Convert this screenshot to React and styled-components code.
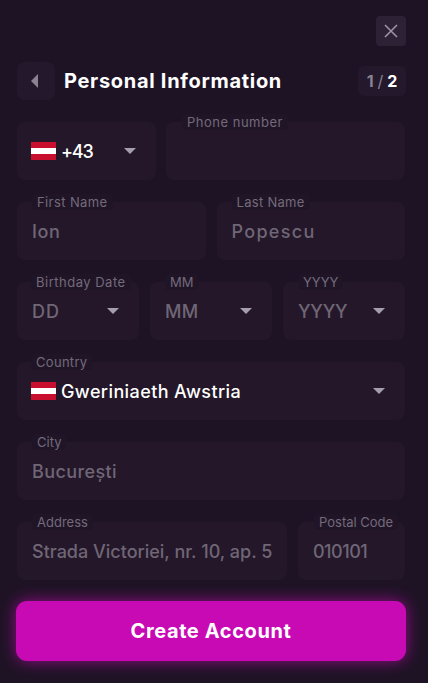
import React from "react";
import styled, { createGlobalStyle } from "styled-components";

const GlobalStyle = createGlobalStyle`
  html, body {
    margin: 0;
    padding: 0;
    height: 100%;
    background: #1e1325;
    font-family: "Inter", "Noto Sans", sans-serif;
  }
  * { box-sizing: border-box; }
`;

const Caret = () => (
  <CaretIcon viewBox="0 0 12 6"><path d="M0 0h12L6 6z" fill="currentColor" /></CaretIcon>
);

const Flag = () => (
  <FlagBox><span /><span /><span /></FlagBox>
);

function Field({ label, labelLeft, labelTrack, value, track, filled, flag, caret }) {
  return (
    <FieldBox>
      {label && <FieldLabel $left={labelLeft} $track={labelTrack}>{label}</FieldLabel>}
      {flag && <Flag />}
      {value && <FieldValue $filled={filled} $track={track}>{value}</FieldValue>}
      {caret && <Caret />}
    </FieldBox>
  );
}

export default function App() {
  return (
    <Screen>
      <GlobalStyle />
      <TopBar>
        <CloseButton>
          <svg width="14" height="14" viewBox="0 0 14 14">
            <path d="M1 1l12 12M13 1L1 13" stroke="currentColor" strokeWidth="1.6" fill="none" />
          </svg>
        </CloseButton>
      </TopBar>
      <Header>
        <BackButton>
          <svg width="7" height="14" viewBox="0 0 7 14"><path d="M7 0v14L0 7z" fill="currentColor" /></svg>
        </BackButton>
        <Title>Personal Information</Title>
        <Steps><span>1</span><i>/</i><b>2</b></Steps>
      </Header>
      <Form>
        <Row $cols="139px 1fr" $gap={10}>
          <Field value="+43" track={-1.2} filled flag caret />
          <Field label="Phone number" labelLeft={21} labelTrack={0.5} />
        </Row>
        <Row $cols="1fr 1fr">
          <Field label="First Name" labelLeft={20} labelTrack={0.4} value="Ion" track={0.6} />
          <Field label="Last Name" labelLeft={20} labelTrack={0.3} value="Popescu" track={1.3} />
        </Row>
        <Row $cols="1fr 1fr 1fr">
          <Field label="Birthday Date" labelLeft={19} labelTrack={0.5} value="DD" track={1} caret />
          <Field label="MM" labelLeft={20} value="MM" track={0.2} caret />
          <Field label="YYYY" labelLeft={20} value="YYYY" track={-0.2} caret />
        </Row>
        <Row $cols="1fr">
          <Field label="Country" labelLeft={19} labelTrack={0.3} value="Gweriniaeth Awstria" track={0.4} filled flag caret />
        </Row>
        <Row $cols="1fr">
          <Field label="City" labelLeft={20} value="București" track={0.4} />
        </Row>
        <Row $cols="270px 1fr">
          <Field label="Address" labelLeft={20} value="Strada Victoriei, nr. 10, ap. 5" />
          <Field label="Postal Code" labelLeft={21} value="010101" track={-0.5} />
        </Row>
        <SubmitButton>Create Account</SubmitButton>
      </Form>
    </Screen>
  );
}

const Screen = styled.div`
  height: 683px;
  overflow: hidden;
  padding: 16px 22px 0 16px;
  background: #1e1325;
`;

const TopBar = styled.div`
  display: flex;
  justify-content: flex-end;
`;

const CloseButton = styled.button`
  width: 30px;
  height: 30px;
  padding: 0;
  border: 0;
  border-radius: 4px;
  display: flex;
  align-items: center;
  justify-content: center;
  background: #2d2136;
  color: #9c93a4;
`;

const Header = styled.div`
  display: flex;
  align-items: center;
  height: 38px;
  margin-top: 16px;
`;

const BackButton = styled.button`
  width: 38px;
  height: 38px;
  margin-left: 1px;
  padding: 0 3px 0 0;
  border: 0;
  border-radius: 8px;
  display: flex;
  align-items: center;
  justify-content: center;
  background: #24192c;
  color: #8a8291;
`;

const Title = styled.h1`
  flex: 1;
  margin: 0 0 0 9px;
  font-size: 20px;
  line-height: 38px;
  font-weight: 700;
  letter-spacing: 0.7px;
  color: #fff;
`;

const Steps = styled.div`
  width: 48px;
  height: 30px;
  display: flex;
  align-items: center;
  justify-content: center;
  gap: 4px;
  border-radius: 6px;
  background: #24192c;
  font-size: 16px;
  font-weight: 700;
  color: #fff;

  span { color: #8a8291; }
  i { font-style: normal; font-weight: 400; color: #8a8291; }
  b { font-weight: 700; }
`;

const Form = styled.div`
  display: flex;
  flex-direction: column;
  gap: 22px;
  margin-top: 22px;
  padding: 0 1px;
`;

const Row = styled.div`
  display: grid;
  grid-template-columns: ${(p) => p.$cols};
  gap: ${(p) => p.$gap ?? 11}px;
`;

const FieldBox = styled.div`
  position: relative;
  height: 58px;
  padding: 0 20px 0 15px;
  display: flex;
  align-items: center;
  border-radius: 8px;
  background: #241729;
`;

const FieldLabel = styled.label`
  position: absolute;
  top: -8px;
  left: ${(p) => p.$left - 5}px;
  padding: 0 5px;
  border-radius: 4px;
  font-size: 13px;
  line-height: 16px;
  letter-spacing: ${(p) => p.$track ?? 0}px;
  color: #736a7a;
  background: #201527;
  white-space: nowrap;
`;

const FieldValue = styled.span`
  flex: 1;
  font-size: 18px;
  font-weight: 500;
  letter-spacing: ${(p) => p.$track ?? 0}px;
  white-space: nowrap;
  color: ${(p) => (p.$filled ? "#fff" : "#6f6676")};
`;

const CaretIcon = styled.svg`
  flex: none;
  width: 12px;
  height: 6px;
  color: #a59eac;
`;

const FlagBox = styled.div`
  flex: none;
  width: 25px;
  height: 18px;
  margin: 0 5px 0 -1px;
  display: flex;
  flex-direction: column;

  span { flex: 1; background: #c8102e; }
  span:nth-child(2) { background: #fff; }
`;

const SubmitButton = styled.button`
  height: 60px;
  margin: -1px -1px 0;
  border: 0;
  border-radius: 11px;
  background: #c80ab4;
  box-shadow: 0 0 16px rgba(200, 10, 180, 0.7);
  font-family: inherit;
  font-size: 20px;
  font-weight: 700;
  letter-spacing: 0.6px;
  color: #fff;
`;
